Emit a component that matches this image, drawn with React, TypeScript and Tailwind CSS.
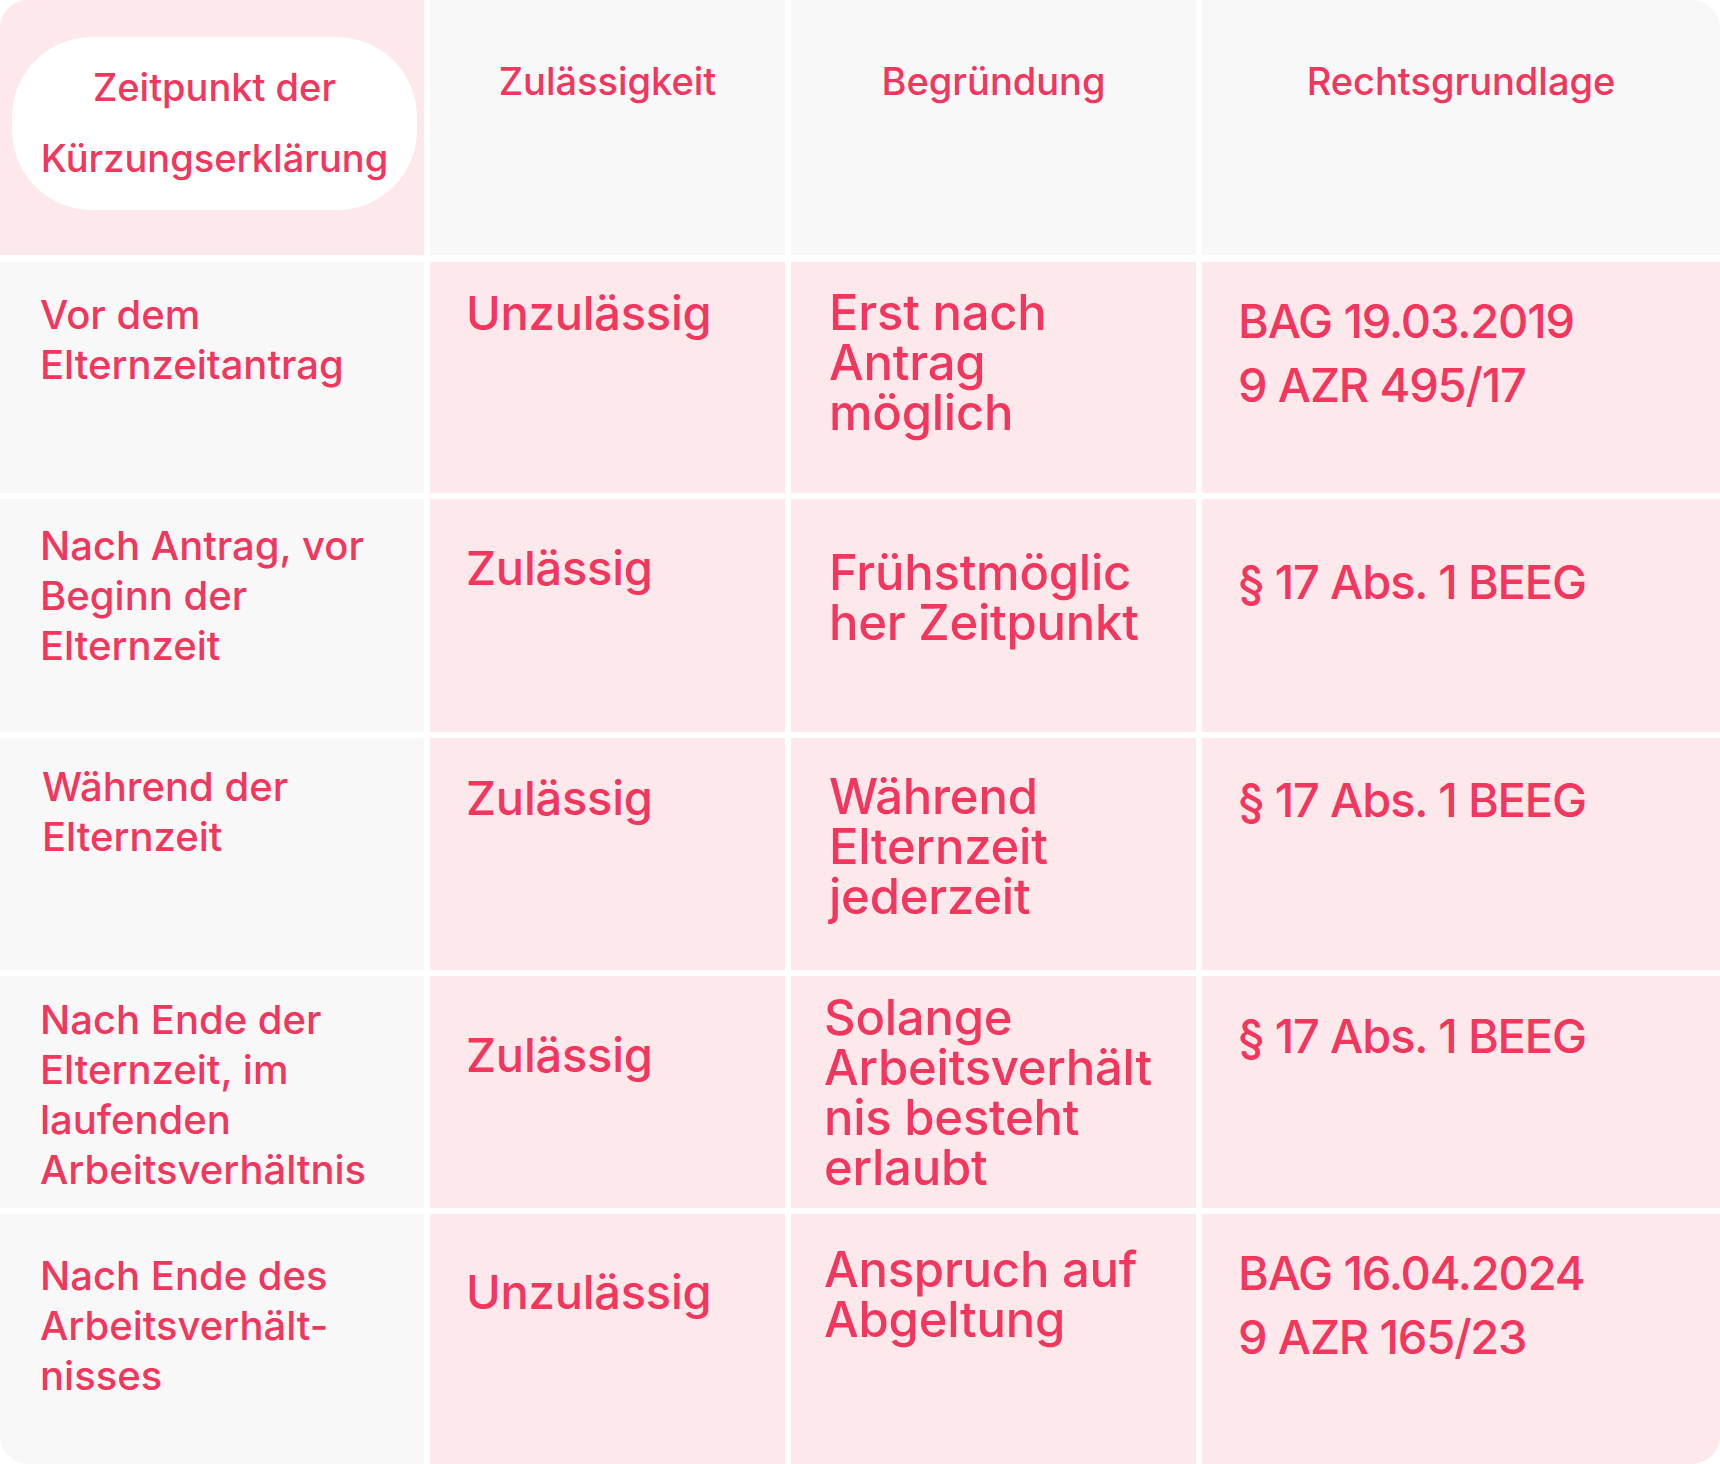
import React from 'react';

type Cell = { lines: string[]; cls: string };
type Row = { h: string; cells: [Cell, Cell, Cell, Cell] };

const rows: Row[] = [
    {
        h: 'h-[231px]',
        cells: [
            { lines: ['Vor dem', 'Elternzeitantrag'], cls: 'pt-[28px] pl-[40px]' },
            { lines: ['Unzulässig'], cls: 'pt-[26px] pl-[36px]' },
            { lines: ['Erst nach', 'Antrag', 'möglich'], cls: 'pt-[26px] pl-[38px]' },
            { lines: ['BAG 19.03.2019', '9 AZR 495/17'], cls: 'pt-[27px] pl-[36px]' },
        ],
    },
    {
        h: 'h-[233px]',
        cells: [
            { lines: ['Nach Antrag, vor', 'Beginn der', 'Elternzeit'], cls: 'pt-[22px] pl-[40px]' },
            { lines: ['Zulässig'], cls: 'pt-[44px] pl-[36px]' },
            { lines: ['Frühstmöglic', 'her Zeitpunkt'], cls: 'pt-[49px] pl-[38px]' },
            { lines: ['§ 17 Abs. 1 BEEG'], cls: 'pt-[51px] pl-[36px]' },
        ],
    },
    {
        h: 'h-[232px]',
        cells: [
            { lines: ['Während der', 'Elternzeit'], cls: 'pt-[24px] pl-[42px]' },
            { lines: ['Zulässig'], cls: 'pt-[35px] pl-[36px]' },
            { lines: ['Während', 'Elternzeit', 'jederzeit'], cls: 'pt-[34px] pl-[38px]' },
            { lines: ['§ 17 Abs. 1 BEEG'], cls: 'pt-[30px] pl-[36px]' },
        ],
    },
    {
        h: 'h-[232px]',
        cells: [
            { lines: ['Nach Ende der', 'Elternzeit, im', 'laufenden', 'Arbeitsverhältnis'], cls: 'pt-[19px] pl-[40px]' },
            { lines: ['Zulässig'], cls: 'pt-[54px] pl-[36px]' },
            { lines: ['Solange', 'Arbeitsverhält', 'nis besteht', 'erlaubt'], cls: 'pt-[17px] pl-[33px]' },
            { lines: ['§ 17 Abs. 1 BEEG'], cls: 'pt-[28px] pl-[36px]' },
        ],
    },
    {
        h: 'h-[250px]',
        cells: [
            { lines: ['Nach Ende des', 'Arbeitsverhält-', 'nisses'], cls: 'pt-[37px] pl-[40px]' },
            { lines: ['Unzulässig'], cls: 'pt-[53px] pl-[36px]' },
            { lines: ['Anspruch auf', 'Abgeltung'], cls: 'pt-[31px] pl-[33px]' },
            { lines: ['BAG 16.04.2024', '9 AZR 165/23'], cls: 'pt-[27px] pl-[36px]' },
        ],
    },
];

const colText = [
    'bg-[#f8f8f8] text-[40px] leading-[50px]',
    'bg-[#fde8ec] text-[47px] leading-[50px] tracking-[-0.005em]',
    'bg-[#fde8ec] text-[49px] leading-[50px] tracking-[-0.005em]',
    'bg-[#fde8ec] text-[47px] leading-[64px] tracking-[-0.025em]',
];

const headers = ['Zulässigkeit', 'Begründung', 'Rechtsgrundlage'];

export default function App() {
    return (
        <div className="w-[1720px] h-[1464px] bg-white font-['Inter','Liberation_Sans',sans-serif] font-medium text-[#f2365d]">
            <div className="flex flex-col gap-y-[6px] overflow-hidden rounded-[28px] bg-white">
                {/* header */}
                <div className="grid h-[255px] grid-cols-[424px_355px_405px_518px] gap-x-[6px] mb-[1px]">
                    <div className="bg-[#fde8ec] pt-[37px] pl-[12px] pr-[7px]">
                        <div className="flex h-[173px] flex-col items-center justify-center rounded-[80px] bg-white pb-[2px] text-[38px] leading-[71px]">
                            <span>Zeitpunkt der</span>
                            <span>Kürzungserklärung</span>
                        </div>
                    </div>
                    {headers.map((h) => (
                        <div key={h} className="bg-[#f8f8f8] pt-[56px] text-center text-[38px] leading-[50px]">
                            {h}
                        </div>
                    ))}
                </div>

                {rows.map((row, ri) => (
                    <div key={ri} className={`grid grid-cols-[424px_355px_405px_518px] gap-x-[6px] ${row.h}`}>
                        {row.cells.map((cell, ci) => (
                            <div key={ci} className={`${colText[ci]} ${cell.cls} whitespace-nowrap`}>
                                {cell.lines.map((l, li) => (
                                    <div key={li}>{l}</div>
                                ))}
                            </div>
                        ))}
                    </div>
                ))}
            </div>
        </div>
    );
}
